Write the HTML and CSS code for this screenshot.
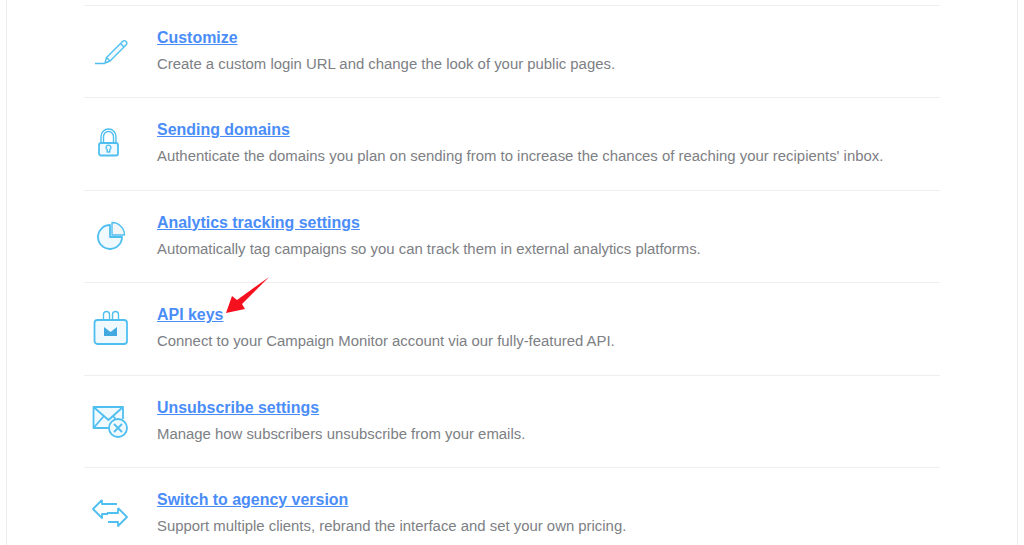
FILE: index.html
```html
<!DOCTYPE html>
<html lang="en">
<head>
    <meta charset="UTF-8">
    <meta name="viewport" content="width=device-width, initial-scale=1.0">
    <title>Account settings</title>
    <link rel="stylesheet" href="styles.css">
</head>
<body>
    <main class="panel">
        <ul class="settings">
            <li class="setting">
                <svg class="setting-icon" viewBox="0 0 40 40">
                    <path class="fill" d="M16 26 L32 10 L35 14 L19 30 Z"/>
                    <path d="M4 32.500 H14 M14 32 L15.500 26.500 L31.500 10.500 A2.400 2.400 0 0 1 35 14 L19 30 Z M15.500 26.500 L19 30 M29.500 12.500 L33 16"/>
                </svg>
                <div class="setting-text">
                    <a class="setting-title" href="#">Customize</a>
                    <p>Create a custom login URL and change the look of your public pages.</p>
                </div>
            </li>
            <li class="setting">
                <svg class="setting-icon" viewBox="0 0 40 40">
                    <rect class="fill" x="8" y="20" width="19" height="12.500" rx="2"/>
                    <rect class="thick" x="8" y="20" width="19" height="12.500" rx="2"/>
                    <path d="M10 20 V13.500 A7.500 7.500 0 0 1 25 13.500 V20 M12.500 20 V13.500 A5 5 0 0 1 22.500 13.500 V20"/>
                    <path d="M16.200 26.500 V29 H18.800 V26.500 A2.400 2.400 0 1 0 16.200 26.500 Z"/>
                </svg>
                <div class="setting-text">
                    <a class="setting-title" href="#">Sending domains</a>
                    <p>Authenticate the domains you plan on sending from to increase the chances of reaching your recipients' inbox.</p>
                </div>
            </li>
            <li class="setting">
                <svg class="setting-icon" viewBox="0 0 40 40">
                    <path class="fill" d="M19 9 A12 12 0 1 0 31 21 H19 Z"/>
                    <path class="thick" d="M19 9 A12 12 0 1 0 31 21 H19 Z"/>
                    <path class="fill-grey" d="M21 6.500 A12.500 12.500 0 0 1 33.500 19 H21 Z"/>
                    <path d="M21 6.500 A12.500 12.500 0 0 1 33.500 19 H21 Z"/>
                </svg>
                <div class="setting-text">
                    <a class="setting-title" href="#">Analytics tracking settings</a>
                    <p>Automatically tag campaigns so you can track them in external analytics platforms.</p>
                </div>
            </li>
            <li class="setting">
                <svg class="setting-icon" viewBox="0 0 40 40">
                    <rect class="fill" x="3.500" y="12" width="32.500" height="24" rx="3"/>
                    <rect class="thick" x="3.500" y="12" width="32.500" height="24" rx="3"/>
                    <path d="M12.500 12 V6.500 A3 3 0 0 1 18.500 6.500 V12 M21.500 12 V6.500 A3 3 0 0 1 27.500 6.500 V12"/>
                    <path class="solid" d="M13 19 L19.500 24 L26 19 V28 H13 Z"/>
                </svg>
                <div class="setting-text">
                    <a class="setting-title" href="#">API keys</a>
                    <p>Connect to your Campaign Monitor account via our fully-featured API.</p>
                </div>
                <svg class="arrow" viewBox="0 0 46 40">
                    <path d="M44 1 L17 28 L20 33 L1 37 L7 20 L12 24 Z"/>
                </svg>
            </li>
            <li class="setting">
                <svg class="setting-icon" viewBox="0 0 40 40">
                    <path class="fill" d="M2.500 6 H32 V26.500 H2.500 Z"/>
                    <path class="thick" d="M18 27 H2.500 V6 H32 V18 M2.500 6 L17.500 19 L32 6 M2.500 27 L12.500 15.500 M22.500 15.500 L24.500 18"/>
                    <circle class="fill" cx="27" cy="27" r="9"/>
                    <circle class="thick" cx="27" cy="27" r="9"/>
                    <path class="thick" d="M23 23 L31 31 M31 23 L23 31"/>
                </svg>
                <div class="setting-text">
                    <a class="setting-title" href="#">Unsubscribe settings</a>
                    <p>Manage how subscribers unsubscribe from your emails.</p>
                </div>
            </li>
            <li class="setting">
                <svg class="setting-icon" viewBox="0 0 40 40">
                    <path class="thick" d="M11 7 L2 16 L11 25 V21 H17 M11 7 V11 H26"/>
                    <path class="thick" d="M27 15 L36 24 L27 33 V29 H17 M27 15 V20 H16"/>
                </svg>
                <div class="setting-text">
                    <a class="setting-title" href="#">Switch to agency version</a>
                    <p>Support multiple clients, rebrand the interface and set your own pricing.</p>
                </div>
            </li>
        </ul>
    </main>
</body>
</html>
```

FILE: styles.css
```css
html, body {
    height: 545px;
    overflow: hidden;
}

body {
    font-family: "Liberation Sans", Arial, sans-serif;
    margin: 0;
    color: #7d8084;
    background-color: #fff;
}

.panel {
    margin: 0 6px;
    height: 545px;
    box-sizing: border-box;
    padding: 4.6px 77px 0;
    background-color: #fff;
    border-left: 1px solid #ededed;
    border-right: 1px solid #ededed;
}

.settings {
    list-style: none;
    margin: 0;
    padding: 0;
}

.setting {
    position: relative;
    display: flex;
    align-items: center;
    gap: 26px;
    height: 92.5px;
    box-sizing: border-box;
    padding: 0 0 1.6px 7px;
    border-top: 1px solid #eeeeee;
}

.setting-icon {
    flex: none;
    width: 40px;
    height: 40px;
    fill: none;
    stroke: #4fbff0;
    stroke-width: 1.4;
    stroke-linejoin: round;
}

.setting-icon .fill {
    fill: #f0f9fe;
    stroke: none;
}

.setting-icon .fill-grey {
    fill: #f4f5f6;
    stroke: none;
}

.setting-icon .thick {
    stroke-width: 1.8;
}

.setting-icon .solid {
    fill: #3fa9e0;
    stroke: none;
}

.setting-title {
    font-size: 15.95px;
    font-weight: bold;
    line-height: 18px;
    color: #4a8df8;
    text-decoration: underline;
}

.setting-text p {
    margin: 8px 0 0;
    font-size: 14.9px;
    line-height: 18px;
}

.arrow {
    position: absolute;
    left: 141px;
    top: -7px;
    width: 46px;
    height: 40px;
    fill: #f4101c;
}
```
